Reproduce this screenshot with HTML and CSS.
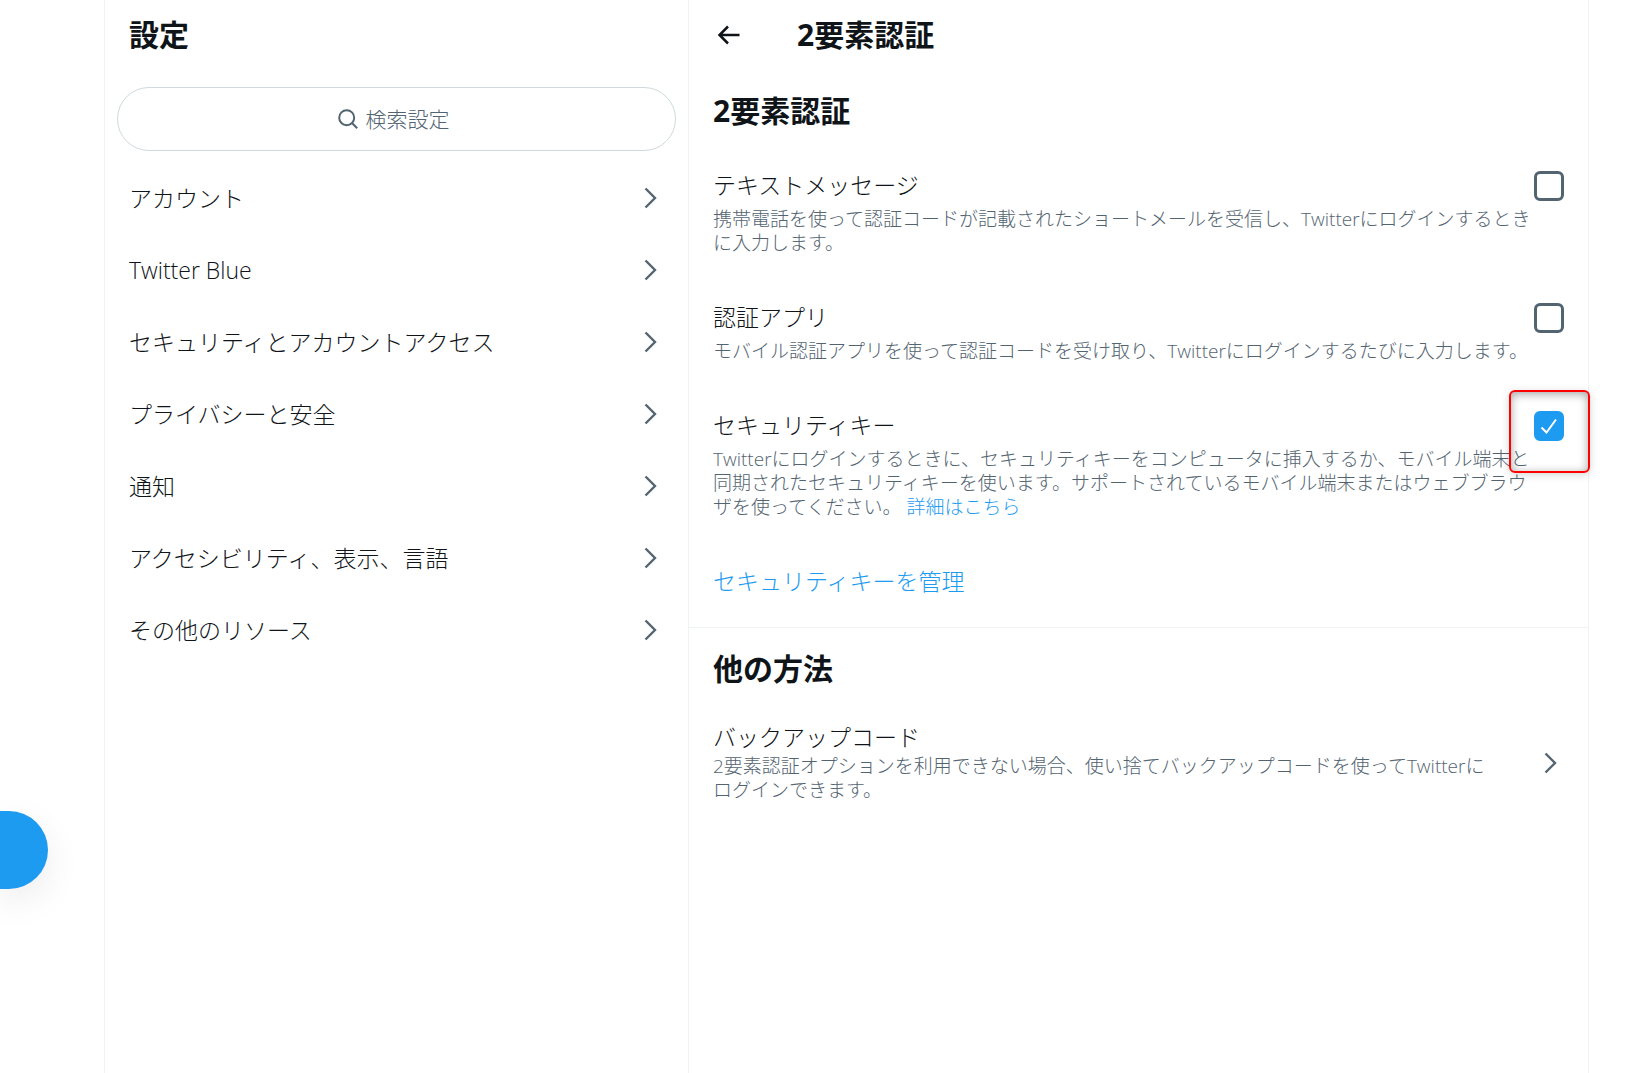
FILE: index.html
```html
<!DOCTYPE html>
<html lang="ja">
<head>
<meta charset="utf-8">
<meta name="viewport" content="width=device-width, initial-scale=1">
<title>2要素認証</title>
<link rel="stylesheet" href="styles.css">
</head>
<body>
<svg class="sprite" aria-hidden="true">
  <symbol id="chevron" viewBox="0 0 28 28"><path d="M9.5 4.5 19 14l-9.5 9.5"/></symbol>
</svg>
<div class="layout">
  <header class="rail">
    <button class="compose" type="button" aria-label="ツイートする"></button>
  </header>

  <section class="settings">
    <div class="bar"><h2 class="heading">設定</h2></div>
    <label class="search">
      <svg class="search-icon" viewBox="0 0 20 20" aria-hidden="true"><circle cx="8.7" cy="8.7" r="7.5"/><path d="m14 14 5.2 5.2"/></svg>
      <input class="search-input" type="text" placeholder="検索設定" aria-label="検索設定">
    </label>
    <nav class="menu">
      <a class="menu-item" href="#account"><span>アカウント</span><svg class="chevron"><use href="#chevron"/></svg></a>
      <a class="menu-item" href="#blue"><span>Twitter Blue</span><svg class="chevron"><use href="#chevron"/></svg></a>
      <a class="menu-item" href="#security"><span>セキュリティとアカウントアクセス</span><svg class="chevron"><use href="#chevron"/></svg></a>
      <a class="menu-item" href="#privacy"><span>プライバシーと安全</span><svg class="chevron"><use href="#chevron"/></svg></a>
      <a class="menu-item" href="#notifications"><span>通知</span><svg class="chevron"><use href="#chevron"/></svg></a>
      <a class="menu-item" href="#accessibility"><span>アクセシビリティ、表示、言語</span><svg class="chevron"><use href="#chevron"/></svg></a>
      <a class="menu-item" href="#resources"><span>その他のリソース</span><svg class="chevron"><use href="#chevron"/></svg></a>
    </nav>
  </section>

  <main class="detail">
    <div class="bar">
      <button class="back" type="button" aria-label="戻る">
        <svg class="back-icon" viewBox="0 0 30 30" aria-hidden="true"><path d="M26.5 15H7M15 6.5 6.5 15l8.5 8.5"/></svg>
      </button>
      <h1 class="heading">2要素認証</h1>
    </div>

    <section class="group">
      <h2 class="heading group-heading">2要素認証</h2>
      <div class="option">
        <div class="option-row">
          <label class="title" for="sms">テキストメッセージ</label>
          <span class="check"><input class="check-box" type="checkbox" id="sms"></span>
        </div>
        <p class="note">携帯電話を使って認証コードが記載されたショートメールを受信し、Twitterにログインするときに入力します。</p>
      </div>
      <div class="option">
        <div class="option-row">
          <label class="title" for="app">認証アプリ</label>
          <span class="check"><input class="check-box" type="checkbox" id="app"></span>
        </div>
        <p class="note">モバイル認証アプリを使って認証コードを受け取り、Twitterにログインするたびに入力します。</p>
      </div>
      <div class="option">
        <div class="option-row">
          <label class="title" for="key">セキュリティキー</label>
          <span class="check">
            <input class="check-box" type="checkbox" id="key" checked>
            <svg class="check-mark" viewBox="0 0 30 30" aria-hidden="true"><path d="m7.5 16.5 5 5L22 8.5"/></svg>
            <span class="highlight"></span>
          </span>
        </div>
        <p class="note">Twitterにログインするときに、セキュリティキーをコンピュータに挿入するか、モバイル端末と同期されたセキュリティキーを使います。サポートされているモバイル端末またはウェブブラウザを使ってください。 <a class="link" href="#more">詳細はこちら</a></p>
      </div>
      <a class="title link manage" href="#manage">セキュリティキーを管理</a>
    </section>

    <section class="group">
      <h2 class="heading group-heading">他の方法</h2>
      <a class="backup" href="#backup">
        <span class="backup-text">
          <span class="title">バックアップコード</span>
          <span class="note">2要素認証オプションを利用できない場合、使い捨てバックアップコードを使ってTwitterにログインできます。</span>
        </span>
        <svg class="chevron"><use href="#chevron"/></svg>
      </a>
    </section>
  </main>
</div>
</body>
</html>
```
FILE: styles.css
```css
:root {
  --ink: #0f1419;
  --muted: #536471;
  --blue: #1d9bf0;
  --line: #eff3f4;
}

* { box-sizing: border-box; }

body {
  margin: 0;
  background: #fff;
  color: var(--ink);
  font-family: "Open Sans", "Noto Sans CJK JP Light", "Noto Sans CJK JP", sans-serif;
  font-weight: 300;
}

h1, h2, p { margin: 0; }
a { color: inherit; text-decoration: none; }
button { padding: 0; border: 0; background: none; cursor: pointer; }
svg { flex: none; fill: none; stroke: currentColor; }
.sprite { display: none; }

.layout {
  display: grid;
  grid-template-columns: 104px minmax(0, 584fr) minmax(0, 901fr) 39px;
  min-height: 100vh;
}

/* left rail */
.rail {
  display: flex;
  flex-direction: column;
  justify-content: flex-end;
  padding-bottom: 184px;
}
.compose {
  width: 48px;
  height: 78px;
  border-radius: 0 39px 39px 0;
  background: var(--blue);
  box-shadow: 0 12px 36px rgba(0, 0, 0, 0.08);
}

/* shared text */
.bar {
  display: flex;
  align-items: center;
  height: 70px;
  padding: 0 24px;
}
.heading {
  font-family: "Open Sans", "Noto Sans CJK JP", sans-serif;
  font-size: 30px;
  line-height: 36px;
  font-weight: 700;
}
.title {
  font-size: 23px;
  line-height: 28px;
}
.note {
  color: var(--muted);
  font-size: 19px;
  line-height: 24px;
}
.link { color: var(--blue); }
.chevron {
  width: 28px;
  height: 28px;
  color: var(--muted);
  stroke-width: 2.4;
}

/* settings column */
.settings { border-left: 1px solid var(--line); }
.search {
  display: flex;
  align-items: center;
  justify-content: center;
  gap: 8px;
  height: 64px;
  margin: 17px 12px 11px;
  border: 1px solid #cfd9de;
  border-radius: 32px;
  color: var(--muted);
}
.search-icon {
  width: 20px;
  height: 20px;
  stroke-width: 2;
}
.search-input {
  width: 90px;
  padding: 0;
  border: 0;
  outline: 0;
  background: none;
  color: var(--ink);
  font: inherit;
  font-size: 21px;
}
.search-input::placeholder { color: var(--muted); opacity: 1; }
.menu-item {
  display: flex;
  align-items: center;
  justify-content: space-between;
  height: 72px;
  padding: 0 24px;
  font-size: 23px;
  line-height: 28px;
}

/* detail column */
.detail {
  border-left: 1px solid var(--line);
  border-right: 1px solid var(--line);
}
.back {
  width: 30px;
  height: 30px;
  margin-right: 54px;
  color: var(--ink);
}
.back-icon {
  display: block;
  width: 30px;
  height: 30px;
  stroke-width: 2.5;
}
.group + .group { border-top: 1px solid var(--line); }
.group-heading { padding: 23px 24px 18px; }
.option { padding: 24px; }
.option-row {
  display: flex;
  justify-content: space-between;
  margin-bottom: 6px;
}
.option .note { padding-right: 20px; }

.check {
  position: relative;
  width: 30px;
  height: 30px;
}
.check-box {
  display: block;
  appearance: none;
  width: 30px;
  height: 30px;
  margin: 0;
  border: 3px solid var(--muted);
  border-radius: 6px;
}
.check-box:checked {
  border-color: var(--blue);
  background: var(--blue);
}
.check-mark {
  position: absolute;
  inset: 0;
  color: #fff;
  stroke-width: 2;
  pointer-events: none;
}
.highlight {
  position: absolute;
  inset: -21px -26px -32px -25px;
  border: 2px solid #ff0000;
  border-radius: 6px;
  box-shadow: 0 2px 8px rgba(0, 0, 0, 0.16), inset 0 2px 10px rgba(0, 0, 0, 0.36);
  pointer-events: none;
}

.manage {
  display: block;
  padding: 24px 24px 32px;
}
.backup {
  display: flex;
  align-items: center;
  gap: 36px;
  padding: 18px 24px;
}
.backup-text {
  display: flex;
  flex: 1;
  flex-direction: column;
  gap: 3px;
}
```
